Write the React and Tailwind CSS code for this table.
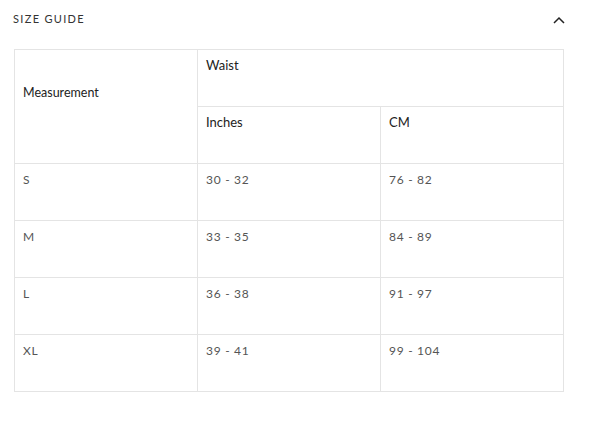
import React from 'react';

const rows = [
    ['S', '30 - 32', '76 - 82'],
    ['M', '33 - 35', '84 - 89'],
    ['L', '36 - 38', '91 - 97'],
    ['XL', '39 - 41', '99 - 104'],
];

const App = () => {
    return (
        <div className="w-[592px] h-[423px] bg-white font-['Lato',sans-serif]">
            {/* header */}
            <div className="flex items-center justify-between pl-[13px] pr-[27px] pt-[12px] h-[26px]">
                <span className="text-[11px] tracking-[0.12em] text-[#333]">SIZE GUIDE</span>
                <svg width="12" height="8" viewBox="0 0 12 8" fill="none" className="mt-[1px]">
                    <path d="M1 7L6 2l5 5" stroke="#222" strokeWidth="1.5" />
                </svg>
            </div>
            {/* table */}
            <div className="ml-[14px] mt-[23px] w-[550px] grid grid-cols-[182px_182px_182px] auto-rows-[56px] gap-px p-px bg-[#e4e4e4] text-[13px]">
                <div className="row-span-2 bg-white pl-[8px] pt-[34px] text-[12.5px] text-[#222]">Measurement</div>
                <div className="col-span-2 bg-white pl-[8px] pt-[6px] text-[#222]">Waist</div>
                <div className="bg-white pl-[8px] pt-[6px] text-[#222]">Inches</div>
                <div className="bg-white pl-[8px] pt-[6px] text-[#222]">CM</div>
                {rows.map((r) => (
                    <React.Fragment key={r[0]}>
                        {r.map((c, i) => (
                            <div key={i} className="bg-white pl-[8px] pt-[7px] text-[12px] tracking-[0.06em] text-[#555]">{c}</div>
                        ))}
                    </React.Fragment>
                ))}
            </div>
        </div>
    );
};

export default App;
